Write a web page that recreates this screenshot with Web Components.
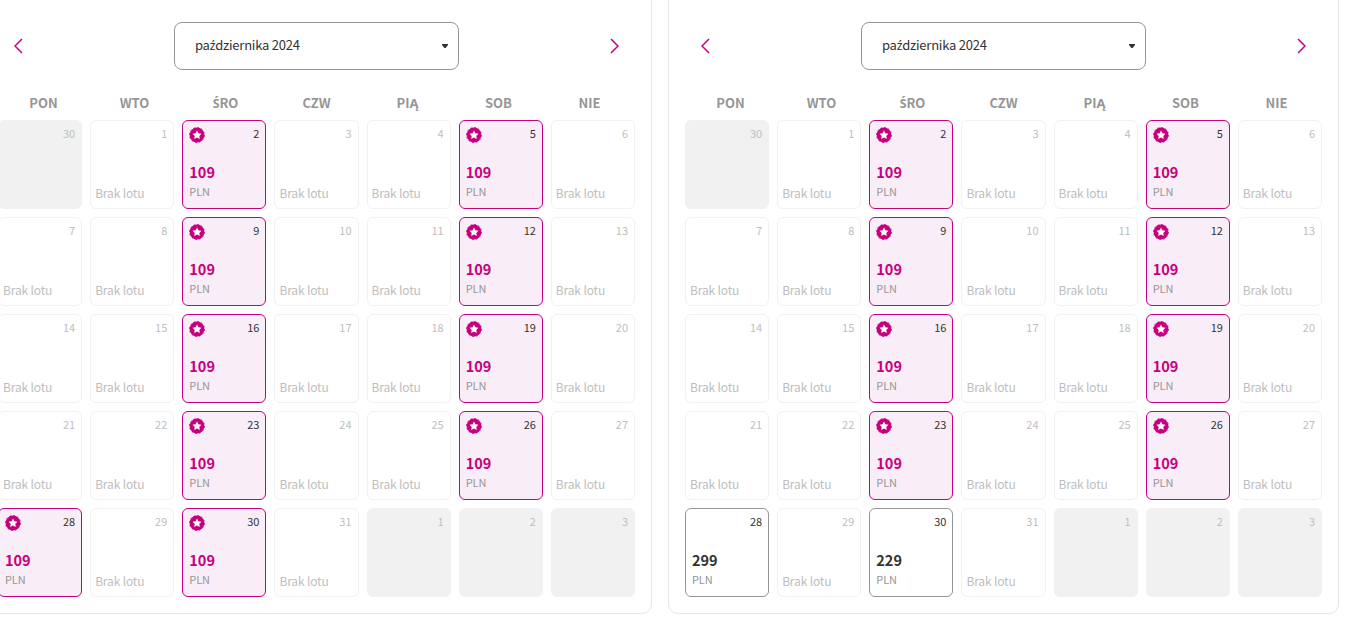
<!DOCTYPE html>
<html lang="pl">
<head>
<meta charset="UTF-8">
<title>Kalendarz lotów</title>
<style>
    body {
        margin: 0;
        background: #ffffff;
        overflow: hidden;
        font-family: "Noto Sans CJK SC", "Noto Sans", sans-serif;
    }

    .calendars {
        display: flex;
        gap: 16px;
        width: 1358px;
        margin: -20px 0 0 -19px;
    }
</style>
</head>
<body>
<main class="calendars">
    <fare-calendar month="października 2024" fares="2:109*,5:109*,9:109*,12:109*,16:109*,19:109*,23:109*,26:109*,28:109*,30:109*"></fare-calendar>
    <fare-calendar month="października 2024" fares="2:109*,5:109*,9:109*,12:109*,16:109*,19:109*,23:109*,26:109*,28:299,30:229"></fare-calendar>
</main>

<script>
// Noto Sans CJK has no composed ź / Ś, so those letters use another face
function accented(text) {
    return text.replace(/[źŚ]/g, letter => `<span class="accented">${letter}</span>`);
}

/**
 * Strzałka nawigacji między miesiącami
 */
class NavArrow extends HTMLElement {
    constructor() {
        super();
        this.attachShadow({ mode: 'open' });
    }

    connectedCallback() {
        const points = this.getAttribute('direction') === 'next' ? '1,1 8,8 1,15' : '8,1 1,8 8,15';

        this.shadowRoot.innerHTML = `
            <style>
                :host {
                    display: block;
                    width: 9px;
                    height: 16px;
                }

                svg {
                    display: block;
                }
            </style>
            <svg width="9" height="16" viewBox="0 0 9 16" fill="none" stroke="#c6007e" stroke-width="1.5">
                <polyline points="${points}"/>
            </svg>
        `;
    }
}

/**
 * Lista wyboru miesiąca
 */
class MonthSelect extends HTMLElement {
    constructor() {
        super();
        this.attachShadow({ mode: 'open' });
        this.shadowRoot.innerHTML = `
            <style>
                :host {
                    display: flex;
                    justify-content: space-between;
                    align-items: center;
                    box-sizing: border-box;
                    width: 285px;
                    height: 48px;
                    padding: 0 10px 0 20px;
                    border: 1px solid #969696;
                    border-radius: 8px;
                    font-size: 13px;
                    line-height: 20px;
                    letter-spacing: -0.23px;
                    color: #333333;
                }

                .label {
                    padding-bottom: 2px;
                }

                svg {
                    display: block;
                }
            </style>
            <span class="label"><slot></slot></span>
            <svg width="6" height="4" viewBox="0 0 6 4"><path d="M0 0h6v1L3.6 4H2.4L0 1z" fill="#333333"/></svg>
        `;
    }
}

/**
 * Znaczek oferty promocyjnej
 */
class PromoBadge extends HTMLElement {
    constructor() {
        super();
        this.attachShadow({ mode: 'open' });
        this.shadowRoot.innerHTML = `
            <style>
                :host {
                    display: block;
                    width: 16px;
                    height: 16px;
                    margin-top: 1px;
                }

                svg {
                    display: block;
                }
            </style>
            <svg width="16" height="16" viewBox="0 0 16 16">
                <circle cx="8" cy="8" r="7.4" fill="#c6007e"/>
                <circle cx="8" cy="8" r="7.5" fill="none" stroke="#c6007e" stroke-width="0.8" stroke-dasharray="1.96 1.96"/>
                <path d="M8 3.6l1.4 2.7 3 .5-2.1 2.1.5 3L8 10.6l-2.8 1.3.5-3-2.1-2.1 3-.5z" fill="#ffffff"/>
            </svg>
        `;
    }
}

/**
 * Pojedynczy dzień kalendarza
 * type: outside | empty | fare | promo
 */
class DayCell extends HTMLElement {
    constructor() {
        super();
        this.attachShadow({ mode: 'open' });
    }

    connectedCallback() {
        const type = this.getAttribute('type');
        const day = this.getAttribute('day');
        const price = this.getAttribute('price');

        let bottom = '';
        if (type === 'empty') {
            bottom = '<div class="none">Brak lotu</div>';
        } else if (price) {
            bottom = `<div class="price">${price}</div><div class="currency">PLN</div>`;
        }

        this.shadowRoot.innerHTML = `
            <style>
                :host {
                    display: flex;
                    flex-direction: column;
                    justify-content: space-between;
                    box-sizing: border-box;
                    height: 89px;
                    padding: 5px 6px 7px 4px;
                    border: 1px solid #f1f1f1;
                    border-radius: 6px;
                    background: #ffffff;
                    color: #bebebe;
                }

                :host([type="outside"]) {
                    background: #f1f1f1;
                }

                :host([type="fare"]),
                :host([type="promo"]) {
                    padding: 5px 6px 8px 6px;
                    border-color: #969696;
                    color: #333333;
                }

                :host([type="promo"]) {
                    background: #f9eef7;
                    border-color: #c6007e;
                }

                .top {
                    display: flex;
                    height: 16px;
                }

                .day {
                    margin-left: auto;
                    font-size: 11px;
                    line-height: 14px;
                }

                .none {
                    font-size: 12px;
                    line-height: 16px;
                    letter-spacing: -0.15px;
                }

                .price {
                    font-size: 14.5px;
                    font-weight: 700;
                    line-height: 20px;
                    margin-bottom: 1px;
                }

                :host([type="promo"]) .price {
                    color: #c6007e;
                }

                .currency {
                    font-size: 11px;
                    line-height: 17px;
                    letter-spacing: -0.1px;
                    color: #969696;
                }
            </style>
            <div class="top">
                ${type === 'promo' ? '<promo-badge></promo-badge>' : ''}
                <span class="day">${day}</span>
            </div>
            <div>${bottom}</div>
        `;
    }
}

/**
 * Kalendarz cen na jeden miesiąc
 */
class FareCalendar extends HTMLElement {
    constructor() {
        super();
        this.attachShadow({ mode: 'open' });
    }

    connectedCallback() {
        this.render();
    }

    // "2:109*" -> dzień 2, cena 109, gwiazdka oznacza promocję
    parseFares() {
        const fares = {};
        this.getAttribute('fares').split(',').forEach(item => {
            const [day, price] = item.split(':');
            fares[day] = { price: parseInt(price, 10), promo: price.endsWith('*') };
        });
        return fares;
    }

    renderDays() {
        const fares = this.parseFares();
        let html = '<day-cell type="outside" day="30"></day-cell>';

        for (let day = 1; day <= 31; day++) {
            const fare = fares[day];
            html += fare
                ? `<day-cell type="${fare.promo ? 'promo' : 'fare'}" day="${day}" price="${fare.price}"></day-cell>`
                : `<day-cell type="empty" day="${day}"></day-cell>`;
        }

        for (let day = 1; day <= 3; day++) {
            html += `<day-cell type="outside" day="${day}"></day-cell>`;
        }
        return html;
    }

    render() {
        const weekdays = ['PON', 'WTO', 'ŚRO', 'CZW', 'PIĄ', 'SOB', 'NIE'];

        this.shadowRoot.innerHTML = `
            <style>
                :host {
                    display: block;
                    box-sizing: border-box;
                    width: 671px;
                    padding: 41px 16px 16px;
                    border: 1px solid #e6e6e6;
                    border-radius: 10px;
                    background: #ffffff;
                }

                .toolbar {
                    display: flex;
                    justify-content: space-between;
                    align-items: center;
                    padding: 0 16px;
                }

                .weekdays {
                    display: grid;
                    grid-template-columns: repeat(7, 1fr);
                    height: 20px;
                    margin-top: 23px;
                    font-size: 13px;
                    font-weight: 700;
                    line-height: 20px;
                    text-align: center;
                    color: #969696;
                }

                .accented {
                    font-family: "Noto Sans", "Open Sans", sans-serif;
                    font-size: 0.94em;
                    line-height: 1;
                }

                .days {
                    display: grid;
                    grid-template-columns: repeat(7, 1fr);
                    gap: 8px;
                    margin-top: 7px;
                }
            </style>
            <div class="toolbar">
                <nav-arrow direction="prev"></nav-arrow>
                <month-select>${accented(this.getAttribute('month'))}</month-select>
                <nav-arrow direction="next"></nav-arrow>
            </div>
            <div class="weekdays">${weekdays.map(name => `<div>${accented(name)}</div>`).join('')}</div>
            <div class="days">${this.renderDays()}</div>
        `;
    }
}

// Rejestracja komponentów
customElements.define('nav-arrow', NavArrow);
customElements.define('month-select', MonthSelect);
customElements.define('promo-badge', PromoBadge);
customElements.define('day-cell', DayCell);
customElements.define('fare-calendar', FareCalendar);
</script>
</body>
</html>
